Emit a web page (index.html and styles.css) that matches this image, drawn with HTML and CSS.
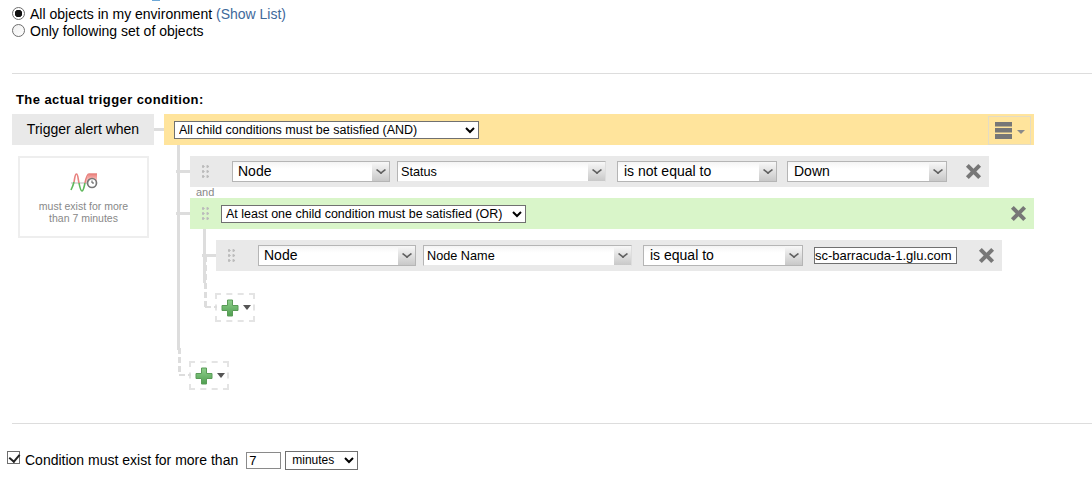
FILE: index.html
```html
<!DOCTYPE html>
<html lang="en">
<head>
<meta charset="utf-8">
<title>Trigger condition</title>
<link rel="stylesheet" href="styles.css">
</head>
<body>
<div class="stray"></div>
<section class="scope">
  <label class="opt"><input type="radio" name="scope" checked><span>All objects in my environment <a class="link">(Show List)</a></span></label>
  <label class="opt"><input type="radio" name="scope"><span>Only following set of objects</span></label>
</section>
<hr class="rule first">
<h3 class="heading">The actual trigger condition:</h3>
<section class="builder">
  <aside class="side">
    <div class="when">Trigger alert when</div>
    <div class="card">
      <svg class="wave" width="28" height="22" viewBox="0 0 28 22">
        <defs><linearGradient id="fade" x1="0" y1="0" x2="0" y2="1"><stop offset="0" stop-color="#ec7f7b"/><stop offset="1" stop-color="#fbd9d6"/></linearGradient></defs>
        <path d="M16 9C17 5 18 2 20 2h7v8H16z" fill="url(#fade)"/>
        <path d="M1 11h16" fill="none" stroke="#aaa" stroke-width=".8"/>
        <path d="M1 18C2 16 3 14 4 10" fill="none" stroke="#5fb85c" stroke-width="1.600"/>
        <path d="M4 10C5 5 5 2 6.500 2S8 7 9 11" fill="none" stroke="#e8827f" stroke-width="1.600"/>
        <path d="M9 11C10 16 10.500 19 12 19S14 15 15 11" fill="none" stroke="#5fb85c" stroke-width="1.600"/>
        <path d="M15 11C16 6 17 2 19 2h8" fill="none" stroke="#e8827f" stroke-width="1.600"/>
        <circle cx="22" cy="11" r="4.500" fill="#fff" stroke="#777" stroke-width="1.700"/>
        <path d="M22 8.500V11h2" fill="none" stroke="#555"/>
      </svg>
      <p>must exist for more than 7 minutes</p>
    </div>
  </aside>
  <div class="tree">
    <div class="bar and-bar">
      <select class="native sel-and"><option>All child conditions must be satisfied (AND)</option></select>
      <button class="menu" type="button">
        <svg width="32" height="18" viewBox="0 0 32 18"><path d="M0 0h17v4.500H0zM0 6h17v4.500H0zM0 12h17v5H0z" fill="#777"/><path d="M22 8h8l-4 4z" fill="#8a8a8a"/></svg>
      </button>
    </div>
    <div class="children outer">
      <div class="row">
        <span class="grip"></span>
        <div class="combo c-node"><span>Node</span><i class="arr"></i></div>
        <div class="combo c-field"><span>Status</span><i class="arr"></i></div>
        <div class="combo c-op"><span>is not equal to</span><i class="arr"></i></div>
        <div class="combo c-val"><span>Down</span><i class="arr"></i></div>
        <svg class="x" viewBox="0 0 18 18"><path d="M1 4l3-3 5 5 5-5 3 3-5 5 5 5-3 3-5-5-5 5-3-3 5-5z" fill="#777"/></svg>
      </div>
      <div class="and">and</div>
      <div class="bar or-bar">
        <span class="grip"></span>
        <select class="native sel-or"><option>At least one child condition must be satisfied (OR)</option></select>
        <svg class="x x-or" viewBox="0 0 18 18"><path d="M1 4l3-3 5 5 5-5 3 3-5 5 5 5-3 3-5-5-5 5-3-3 5-5z" fill="#777"/></svg>
      </div>
      <div class="children inner">
        <div class="row">
          <span class="grip"></span>
          <div class="combo c-node"><span>Node</span><i class="arr"></i></div>
          <div class="combo c-field"><span>Node Name</span><i class="arr"></i></div>
          <div class="combo c-op"><span>is equal to</span><i class="arr"></i></div>
          <input class="val" type="text" value="sc-barracuda-1.glu.com">
          <svg class="x" viewBox="0 0 18 18"><path d="M1 4l3-3 5 5 5-5 3 3-5 5 5 5-3 3-5-5-5 5-3-3 5-5z" fill="#777"/></svg>
        </div>
        <div class="add add-inner">
          <svg width="18" height="18" viewBox="0 0 18 18"><defs><linearGradient id="plus" x1="0" y1="0" x2="0" y2="1"><stop offset="0" stop-color="#8fd08c"/><stop offset="1" stop-color="#4f9f50"/></linearGradient></defs><path d="M6.500 1h5v5.500H17v5h-5.500V17h-5v-5.500H1v-5h5.500z" fill="url(#plus)" stroke="#5a9c58"/></svg><i class="tri"></i>
        </div>
      </div>
      <div class="add add-outer">
        <svg width="18" height="18" viewBox="0 0 18 18"><path d="M6.500 1h5v5.500H17v5h-5.500V17h-5v-5.500H1v-5h5.500z" fill="url(#plus)" stroke="#5a9c58"/></svg><i class="tri"></i>
      </div>
    </div>
  </div>
</section>
<hr class="rule second">
<section class="exist">
  <input type="checkbox" checked>
  <span>Condition must exist for more than</span>
  <input class="num" type="text" value="7">
  <select class="native sel-unit"><option>minutes</option></select>
</section>
</body>
</html>
```
FILE: styles.css
```css
* { box-sizing: border-box; }
html, body { margin: 0; padding: 0; }
body { position: relative; height: 480px; overflow: hidden; background: #fff; color: #000; font: 14px "Liberation Sans", Arial, sans-serif; }
.stray { position: absolute; left: 152px; top: 0; width: 8px; height: 1px; background: #6fa8d6; }
.scope { padding: 5px 0 0 12px; height: 73px; }
.opt { display: flex; align-items: center; height: 17px; }
.opt input { appearance: none; margin: 0 5px 0 0; width: 13px; height: 13px; border: 1px solid #6e6e6e; border-radius: 50%; background: linear-gradient(135deg, #eee, #fff); }
.opt input:checked { background: radial-gradient(circle, #111 0 3.500px, #fff 4px); }
.link { color: #40699b; }
.rule { border: 0; height: 1px; background: #ddd; margin: 0 0 0 12px; }
.heading { margin: 18px 0 0 16px; font-size: 13px; line-height: 15px; font-weight: bold; letter-spacing: .42px; height: 22px; }
.builder { display: flex; margin-left: 12px; }
.side { width: 152px; flex: none; }
.when { position: relative; width: 142px; height: 31px; line-height: 30px; background: #e9e9e9; text-align: center; }
.when::after { content: ""; position: absolute; left: 142px; top: 14px; width: 10px; height: 3px; background: #ddd; }
.card { width: 131px; height: 82px; margin: 11px 0 0 6px; border: 2px solid #eee; text-align: center; padding-top: 14px; }
.wave { display: block; margin: 0 auto; }
.card p { margin: 6px 12px 0; font-size: 10.500px; line-height: 12px; color: #888; }
.tree { width: 870px; flex: none; }
.bar { display: flex; align-items: center; height: 31px; }
.and-bar { background: #ffe49c; padding-left: 10px; position: relative; }
.native { height: 18px; padding: 0; border: 1px solid #707070; background: #fff; color: #000; font: 12.500px "Liberation Sans", Arial, sans-serif; border-radius: 0; }
.sel-and { width: 305px; }
.menu { align-self: flex-start; margin: 2px 3px 0 auto; width: 43px; height: 29px; padding: 0 0 0 6px; background: transparent; border: 1px solid #e4dcc4; display: flex; align-items: center; justify-content: flex-start; }
.children { position: relative; }
.children::before { content: ""; position: absolute; width: 3px; background: #ddd; }
.outer { margin: 11px 0 0 26px; height: 267px; }
.outer::before { left: -13px; top: -11px; height: 205px; }
.inner { margin: 11px 0 0 26px; }
.inner::before { left: -13px; top: -11px; height: 54px; }
.row { position: relative; display: flex; align-items: center; height: 31px; background: #e9e9e9; padding-left: 42px; }
.outer > .row { width: 799px; }
.inner > .row { width: 786px; }
.row::before { content: ""; position: absolute; left: -14px; top: 14px; width: 14px; height: 3px; background: #ddd; }
.or-bar { position: relative; background: #d9f5c9; width: 844px; padding-left: 12px; }
.or-bar::before { content: ""; position: absolute; left: -14px; top: 14px; width: 14px; height: 3px; background: #ddd; }
.grip { width: 7px; height: 13px; flex: none; background-image: radial-gradient(circle at 1.200px 1.500px, #bbb 1.200px, transparent 1.400px); background-size: 4.500px 5px; }
.row .grip { position: absolute; left: 12px; top: 9px; }
.sel-or { margin-left: 12px; width: 305px; }
.x { width: 17px; height: 17px; flex: none; }
.x-or { margin-left: auto; margin-right: 7px; }
.combo { display: flex; align-items: center; height: 21px; border: 1px solid #b5b5b5; background: linear-gradient(#f4f4f4, #fff 35%); flex: none; position: relative; font-size: 14px; padding-left: 5px; }
.combo > span { position: relative; top: -1px; }
.combo .arr { margin-left: auto; width: 17px; height: 19px; background: linear-gradient(#f8f8f8, #c8c8c8); position: relative; }
.combo .arr::after { content: ""; position: absolute; left: 5px; top: 4px; width: 6px; height: 6px; border-right: 2px solid #5f5f5f; border-bottom: 2px solid #5f5f5f; transform: scale(.9, .7) rotate(45deg); }
.c-node { width: 158px; margin-right: 7px; }
.c-field { width: 209px; margin-right: 11px; font-size: 12.700px; padding-left: 3px; border-right-color: #ddd; border-bottom-color: #e9e9e9; }
.c-field > span { top: 0; }
.c-op { width: 160px; margin-right: 10px; padding-left: 6px; }
.c-val { width: 160px; margin-right: 18px; padding-left: 6px; }
.val { width: 143px; height: 17px; margin-right: 21px; margin-left: 1px; padding: 0; border: 1px solid #707070; font: 13px "Liberation Sans", Arial, sans-serif; color: #000; }
.and { height: 11px; line-height: 11px; font-size: 11px; color: #888; padding-left: 6px; }
.add { position: relative; display: flex; align-items: center; gap: 4px; width: 40px; height: 29px; padding-left: 4px; border: 2px dashed #e4e4e4; }
.add::before { content: ""; position: absolute; left: -12px; top: 11px; width: 12px; height: 2px; background: repeating-linear-gradient(90deg, #ddd 0 6px, transparent 6px 9px); }
.add::after { content: ""; position: absolute; width: 3px; left: -13px; background: repeating-linear-gradient(#ddd 0 6px, transparent 6px 9px); }
.add-inner { margin: 22px 0 0 -1px; }
.add-inner::after { top: -39px; height: 52px; }
.add-outer { position: absolute; left: -1px; top: 205px; }
.add-outer::after { top: -15px; height: 26px; }
.tri { width: 0; height: 0; border: 4px solid transparent; border-top: 5px solid #555; border-bottom: 0; }
.exist { display: flex; align-items: center; height: 20px; margin: 26px 0 0 7px; font-size: 14px; }
.exist input[type=checkbox] { appearance: none; position: relative; width: 13px; height: 13px; margin: 0 5px 6px 0; border: 1px solid #6e6e6e; background: #fff; }
.exist input[type=checkbox]:checked::after { content: ""; position: absolute; left: 3px; top: 0; width: 5px; height: 8px; border-right: 2px solid #222; border-bottom: 2px solid #222; transform: rotate(40deg); }
.num { width: 35px; height: 17px; margin: 0 4px 0 8px; padding: 0 2px; border: 1px solid #8a8a8a; font: 13px "Liberation Sans", Arial, sans-serif; }
.sel-unit { width: 73px; height: 19px; font-size: 12px; padding-left: 2px; }
```
